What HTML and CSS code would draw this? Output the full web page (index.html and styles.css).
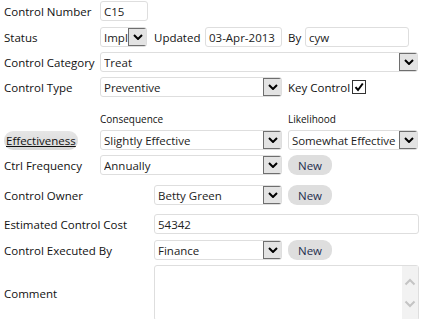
FILE: index.html
```html
<!DOCTYPE html>
<html>
<head>
<meta charset="utf-8">
<link rel="stylesheet" href="styles.css">
</head>
<body>
<div class="form">
  <div class="row first">
    <span class="label">Control Number</span>
    <div class="box w-num">C15</div>
  </div>
  <div class="row gap6">
    <span class="label">Status</span>
    <div class="select w-status"><span class="val">Impl</span><span class="btn"><svg viewBox="0 0 10 6" width="10" height="6"><path d="M1 1L5 5L9 1" fill="none" stroke="#000" stroke-width="2"/></svg></span></div>
    <span class="text w-updated">Updated</span>
    <div class="box w-date">03-Apr-2013</div>
    <span class="text w-by-label">By</span>
    <div class="box w-by">cyw</div>
  </div>
  <div class="row">
    <span class="label">Control Category</span>
    <div class="select w-full"><span class="val">Treat</span><span class="btn"><svg viewBox="0 0 10 6" width="10" height="6"><path d="M1 1L5 5L9 1" fill="none" stroke="#000" stroke-width="2"/></svg></span></div>
  </div>
  <div class="row">
    <span class="label">Control Type</span>
    <div class="select w-mid"><span class="val">Preventive</span><span class="btn"><svg viewBox="0 0 10 6" width="10" height="6"><path d="M1 1L5 5L9 1" fill="none" stroke="#000" stroke-width="2"/></svg></span></div>
    <span class="text key">Key Control</span>
    <span class="check"><svg viewBox="0 0 12 12" width="12" height="12"><path d="M2.5 6.2L5 9L9.8 2.5" fill="none" stroke="#000" stroke-width="2"/></svg></span>
  </div>
  <div class="subrow">
    <span class="label"></span>
    <span class="sub w-sub">Consequence</span>
    <span class="sub">Likelihood</span>
  </div>
  <div class="row">
    <span class="label"><span class="effect">Effectiveness</span></span>
    <div class="select w-mid"><span class="val">Slightly Effective</span><span class="btn"><svg viewBox="0 0 10 6" width="10" height="6"><path d="M1 1L5 5L9 1" fill="none" stroke="#000" stroke-width="2"/></svg></span></div>
    <div class="select w-like"><span class="val tight">Somewhat Effective</span><span class="btn"><svg viewBox="0 0 10 6" width="10" height="6"><path d="M1 1L5 5L9 1" fill="none" stroke="#000" stroke-width="2"/></svg></span></div>
  </div>
  <div class="row">
    <span class="label">Ctrl Frequency</span>
    <div class="select w-mid"><span class="val">Annually</span><span class="btn"><svg viewBox="0 0 10 6" width="10" height="6"><path d="M1 1L5 5L9 1" fill="none" stroke="#000" stroke-width="2"/></svg></span></div>
    <span class="new">New</span>
  </div>
  <div class="row gap10">
    <span class="label wide">Control Owner</span>
    <div class="select w-short"><span class="val">Betty Green</span><span class="btn"><svg viewBox="0 0 10 6" width="10" height="6"><path d="M1 1L5 5L9 1" fill="none" stroke="#000" stroke-width="2"/></svg></span></div>
    <span class="new">New</span>
  </div>
  <div class="row gap9">
    <span class="label wide">Estimated Control Cost</span>
    <div class="box w-cost">54342</div>
  </div>
  <div class="row gap6">
    <span class="label wide">Control Executed By</span>
    <div class="select w-short"><span class="val">Finance</span><span class="btn"><svg viewBox="0 0 10 6" width="10" height="6"><path d="M1 1L5 5L9 1" fill="none" stroke="#000" stroke-width="2"/></svg></span></div>
    <span class="new">New</span>
  </div>
  <div class="row tall">
    <span class="label wide">Comment</span>
    <div class="area">
      <div class="scroll">
        <svg viewBox="0 0 12 8" width="12" height="8"><path d="M1.5 6.5L6 2L10.5 6.5" fill="none" stroke="#c4c4c4" stroke-width="2"/></svg>
        <svg viewBox="0 0 12 8" width="12" height="8"><path d="M1.5 1.5L6 6L10.5 1.5" fill="none" stroke="#c4c4c4" stroke-width="2"/></svg>
      </div>
    </div>
  </div>
</div>
</body>
</html>
```

FILE: styles.css
```css
html, body {
  margin: 0;
  background: #fff;
}
body {
  padding: 1px 0 0 4px;
  font-family: "Open Sans", "Noto Sans", sans-serif;
  font-size: 11.5px;
  color: #111;
}
.form {
  display: flex;
  flex-direction: column;
}
.row {
  display: flex;
  align-items: center;
  height: 20px;
  margin-top: 5px;
}
.row.first { margin-top: 0; }
.row.gap6 { margin-top: 6px; }
.row.gap9 { margin-top: 9px; }
.row.gap10 { margin-top: 10px; }
.row.tall { height: 56px; margin-top: 5px; }
.label {
  width: 96px;
  flex: none;
  white-space: nowrap;
}
.label.wide { width: 150px; }
.box, .select {
  box-sizing: border-box;
  height: 20px;
  border: 1px solid #dedede;
  border-radius: 3px;
  background: #fff;
  display: flex;
  align-items: center;
  padding-left: 3px;
  flex: none;
  white-space: nowrap;
  overflow: hidden;
  color: #222;
}
.select .val {
  flex: 1;
  min-width: 0;
  overflow: hidden;
}
.select .val.tight { letter-spacing: -0.1px; }
.btn {
  box-sizing: border-box;
  width: 19px;
  height: 18px;
  flex: none;
  border: 1px solid #6e6e6e;
  background: #e3e3e3;
  display: flex;
  align-items: center;
  justify-content: center;
  margin-right: -1px;
}
.w-num { width: 48px; }
.w-status { width: 47px; }
.w-updated { width: 51px; margin-left: 7px; }
.w-date { width: 77px; }
.w-by-label { width: 17px; margin-left: 6px; }
.w-by { width: 104px; }
.w-full { width: 318px; }
.w-mid { width: 182px; }
.w-like { width: 130px; margin-left: 6px; }
.w-short { width: 128px; }
.w-cost { width: 265px; }
.text { flex: none; white-space: nowrap; }
.key { margin-left: 6px; }
.check {
  box-sizing: border-box;
  width: 14px;
  height: 14px;
  border: 1px solid #333;
  margin-left: 2px;
  display: flex;
  align-items: center;
  justify-content: center;
  background: #fff;
}
.subrow {
  display: flex;
  align-items: flex-end;
  height: 23px;
  margin-top: 5px;
  font-size: 10px;
  line-height: 12px;
}
.w-sub { width: 188px; }
.effect {
  display: inline-block;
  padding: 2px 2px 2px 2px;
  border-radius: 9px;
  background: linear-gradient(#e6e6e6, #d9d9d9);
  text-decoration: underline;
  line-height: 15px;
}
.new {
  box-sizing: border-box;
  width: 44px;
  height: 20px;
  margin-left: 6px;
  border-radius: 9px;
  background: #dedede;
  color: #1e2e4e;
  display: flex;
  align-items: center;
  justify-content: center;
  flex: none;
}
.area {
  box-sizing: border-box;
  width: 265px;
  height: 56px;
  border: 1px solid #dedede;
  border-radius: 3px;
  background: #fff;
  display: flex;
  justify-content: flex-end;
  flex: none;
}
.scroll {
  width: 16px;
  background: #f2f2f2;
  display: flex;
  flex-direction: column;
  align-items: center;
  justify-content: center;
  gap: 14px;
}
```
